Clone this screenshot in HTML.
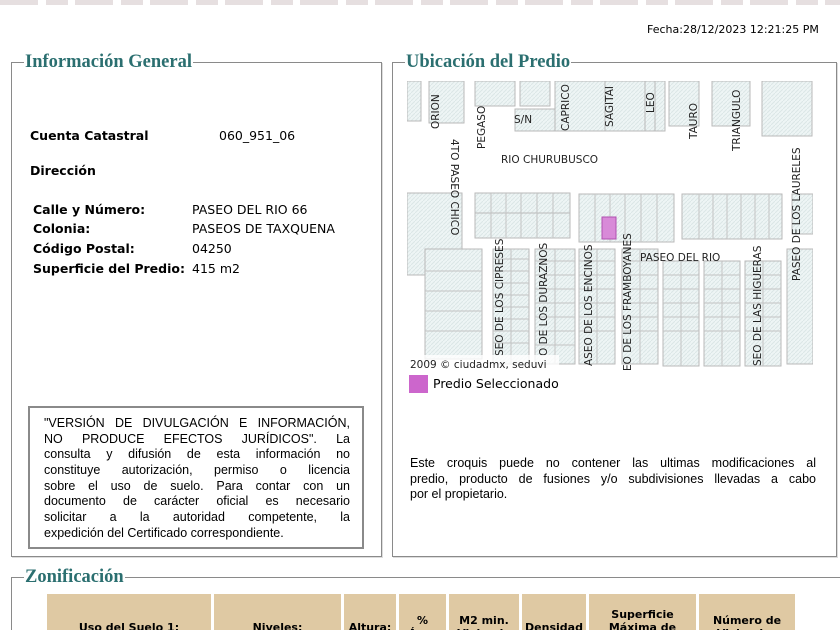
<!DOCTYPE html>
<html><head><meta charset="utf-8"><style>
html,body{margin:0;width:840px;height:630px;overflow:hidden}
body{background:#fff;font-family:"Liberation Sans","DejaVu Sans",sans-serif;color:#000;position:relative}
.a{position:absolute}
.fs{position:absolute;border:1px solid #8a8a8a;box-shadow:inset 1px 1px 0 #fff,1px 1px 0 #ddd}
.lg{position:absolute;background:#fff;font-family:"Liberation Serif",serif;font-weight:bold;font-size:18.5px;color:#2b6f70;padding:0 1px;line-height:20px}
.t{font-size:12.5px;position:absolute;white-space:nowrap;font-family:"DejaVu Sans",sans-serif}
.b{font-weight:bold;font-size:12.5px}
th{background:#dfc9a3;font-size:11px;font-weight:bold;color:#000;text-align:center;padding:0;font-family:"DejaVu Sans",sans-serif;line-height:13px}
.j div{text-align:justify;text-align-last:justify;white-space:nowrap;height:15.7px}
.j div.l{text-align-last:left}
</style></head><body>
<div class="a" style="top:0;left:0;width:840px;height:5px;background:repeating-linear-gradient(90deg,#e6dfe0 0 38px,#fff 38px 46px,#e6dfe0 46px 68px, #fff 68px 75px)"></div>
<div class="t" style="left:647px;top:23px;font-size:11px">Fecha:28/12/2023 12:21:25 PM</div>

<div class="fs" style="left:11px;top:62px;width:369px;height:493px"></div>
<div class="lg" style="left:24px;top:52px">Información General</div>
<div class="t b" style="left:30px;top:128px">Cuenta Catastral</div>
<div class="t" style="left:219px;top:128px">060_951_06</div>
<div class="t b" style="left:30px;top:163px">Dirección</div>
<div class="t b" style="left:33px;top:202px">Calle y Número:</div>
<div class="t" style="left:192px;top:202px">PASEO DEL RIO 66</div>
<div class="t b" style="left:33px;top:221px">Colonia:</div>
<div class="t" style="left:192px;top:221px">PASEOS DE TAXQUENA</div>
<div class="t b" style="left:33px;top:241px">Código Postal:</div>
<div class="t" style="left:192px;top:241px">04250</div>
<div class="t b" style="left:33px;top:261px">Superficie del Predio:</div>
<div class="t" style="left:192px;top:261px">415 m2</div>

<div class="a" style="left:28px;top:406px;width:336px;height:143px;border:2px solid #8a8a8a;box-sizing:border-box"></div>
<div class="a j" style="left:44px;top:416px;width:306px;font-size:12.5px;line-height:15.7px">
<div>"VERSIÓN DE DIVULGACIÓN E INFORMACIÓN,</div>
<div>NO PRODUCE EFECTOS JURÍDICOS". La</div>
<div>consulta y difusión de esta información no</div>
<div>constituye autorización, permiso o licencia</div>
<div>sobre el uso de suelo. Para contar con un</div>
<div>documento de carácter oficial es necesario</div>
<div>solicitar a la autoridad competente, la</div>
<div class="l">expedición del Certificado correspondiente.</div>
</div>

<div class="fs" style="left:392px;top:62px;width:443px;height:493px"></div>
<div class="lg" style="left:405px;top:52px">Ubicación del Predio</div>
<svg class="a" style="left:407px;top:81px" width="406" height="290" viewBox="0 0 406 290">
<defs><pattern id="h" width="4" height="4" patternUnits="userSpaceOnUse"><rect width="4" height="4" fill="#eef5f5"/><path d="M0 4L4 0" stroke="#dbe6e6" stroke-width="1"/></pattern></defs>
<rect width="406" height="290" fill="#fff"/>
<g fill="url(#h)" stroke="#b9b9b9" stroke-width="1">
<rect x="0" y="0" width="14" height="40"/><rect x="22" y="0" width="35" height="42"/><rect x="68" y="0" width="40" height="25"/><rect x="108" y="28" width="90" height="22"/><rect x="113" y="0" width="30" height="25"/><rect x="148" y="0" width="50" height="50"/><rect x="198" y="0" width="60" height="50"/><rect x="238" y="0" width="10" height="50"/><rect x="262" y="0" width="30" height="45"/><rect x="305" y="0" width="38" height="45"/><rect x="355" y="0" width="50" height="55"/>
<rect x="0" y="112" width="55" height="82"/><rect x="68" y="112" width="95" height="45"/><rect x="68" y="132" width="95" height="25"/><rect x="172" y="113" width="95" height="48"/><rect x="275" y="113" width="100" height="45"/><rect x="385" y="113" width="21" height="40"/>
<rect x="18" y="168" width="57" height="110"/><rect x="86" y="168" width="36" height="115"/><rect x="128" y="168" width="40" height="115"/><rect x="172" y="168" width="36" height="115"/><rect x="215" y="168" width="36" height="115"/><rect x="256" y="180" width="36" height="105"/><rect x="297" y="180" width="36" height="105"/><rect x="338" y="180" width="36" height="105"/><rect x="380" y="168" width="26" height="115"/>
</g>
<g stroke="#c4c4c4" stroke-width="1">
<path d="M86 178H122M86 190H122M86 202H122M86 214H122M86 226H122M86 238H122M86 250H122M86 262H122M128 180H168M128 194H168M128 208H168M128 222H168M128 236H168M128 250H168M128 264H168M172 180H208M172 194H208M172 208H208M172 222H208M172 236H208M172 250H208M215 180H251M215 194H251M215 208H251M215 222H251M215 236H251M215 250H251M256 194H292M256 208H292M256 222H292M256 236H292M256 250H292M297 194H333M297 208H333M297 222H333M297 236H333M297 250H333M338 194H374M338 208H374M338 222H374M338 236H374M338 250H374M18 190H75M18 210H75M18 230H75M18 250H75"/>
<path d="M84 112V157M99 112V157M114 112V157M130 112V157M146 112V157M188 113V161M203 113V161M218 113V161M234 113V161M250 113V161M292 113V158M306 113V158M320 113V158M334 113V158M348 113V158M362 113V158M104 168V283M148 168V283M190 168V283M233 168V283M274 180V285M315 180V285M356 180V285"/>
</g>
<rect x="195" y="136" width="14" height="22" fill="#d88ad8" stroke="#b050b0"/>
<g font-family="'DejaVu Sans',sans-serif" font-size="10.5" fill="#222">
<text x="107" y="42">S/N</text>
<text x="94" y="82">RIO CHURUBUSCO</text>
<text x="233" y="180">PASEO DEL RIO</text>
<text transform="translate(32,48) rotate(-90)">ORION</text>
<text transform="translate(78,68) rotate(-90)">PEGASO</text>
<text transform="translate(162,50) rotate(-90)">CAPRICO</text>
<text transform="translate(206,46) rotate(-90)">SAGITAI</text>
<text transform="translate(247,32) rotate(-90)">LEO</text>
<text transform="translate(290,58) rotate(-90)">TAURO</text>
<text transform="translate(333,70) rotate(-90)">TRIANGULO</text>
<text transform="translate(44,58) rotate(90)">4TO PASEO CHICO</text>
<text transform="translate(96,275) rotate(-90)">SEO DE LOS CIPRESES</text>
<text transform="translate(140,275) rotate(-90)">O DE LOS DURAZNOS</text>
<text transform="translate(185,285) rotate(-90)">ASEO DE LOS ENCINOS</text>
<text transform="translate(224,290) rotate(-90)">EO DE LOS FRAMBOYANES</text>
<text transform="translate(354,285) rotate(-90)">SEO DE LAS HIGUERAS</text>
<text transform="translate(393,200) rotate(-90)">PASEO DE LOS LAURELES</text>
</g>
<rect x="0" y="274" width="152" height="16" fill="#fff" opacity=".8"/>
<text x="3" y="287" font-family="'DejaVu Sans',sans-serif" font-size="10.5" fill="#222">2009 © ciudadmx, seduvi</text>
</svg>
<div class="a" style="left:409px;top:375px;width:19px;height:18px;background:#cc66cc"></div>
<div class="t" style="left:433px;top:376px">Predio Seleccionado</div>
<div class="a j" style="left:410px;top:456px;width:406px;font-size:12.5px;line-height:15.7px">
<div>Este croquis puede no contener las ultimas modificaciones al</div>
<div>predio, producto de fusiones y/o subdivisiones llevadas a cabo</div>
<div class="l">por el propietario.</div>
</div>

<div class="fs" style="left:11px;top:577px;width:830px;height:80px"></div>
<div class="lg" style="left:24px;top:567px">Zonificación</div>
<div class="a" style="left:0;top:594px;width:840px;height:36px;overflow:hidden">
<table class="a" style="left:44px;top:0;border-collapse:separate;border-spacing:3px 0">
<tr style="height:66px">
<th style="width:164px">Uso del Suelo 1:</th><th style="width:127px">Niveles:</th><th style="width:52px">Altura:</th><th style="width:47px">%<br>Área</th><th style="width:70px">M2 min.<br>Vivienda</th><th style="width:64px">Densidad</th><th style="width:107px">Superficie<br>Máxima de<br>Construcción</th><th style="width:96px">Número de<br>Viviendas</th></tr>
</table></div>
</body></html>
